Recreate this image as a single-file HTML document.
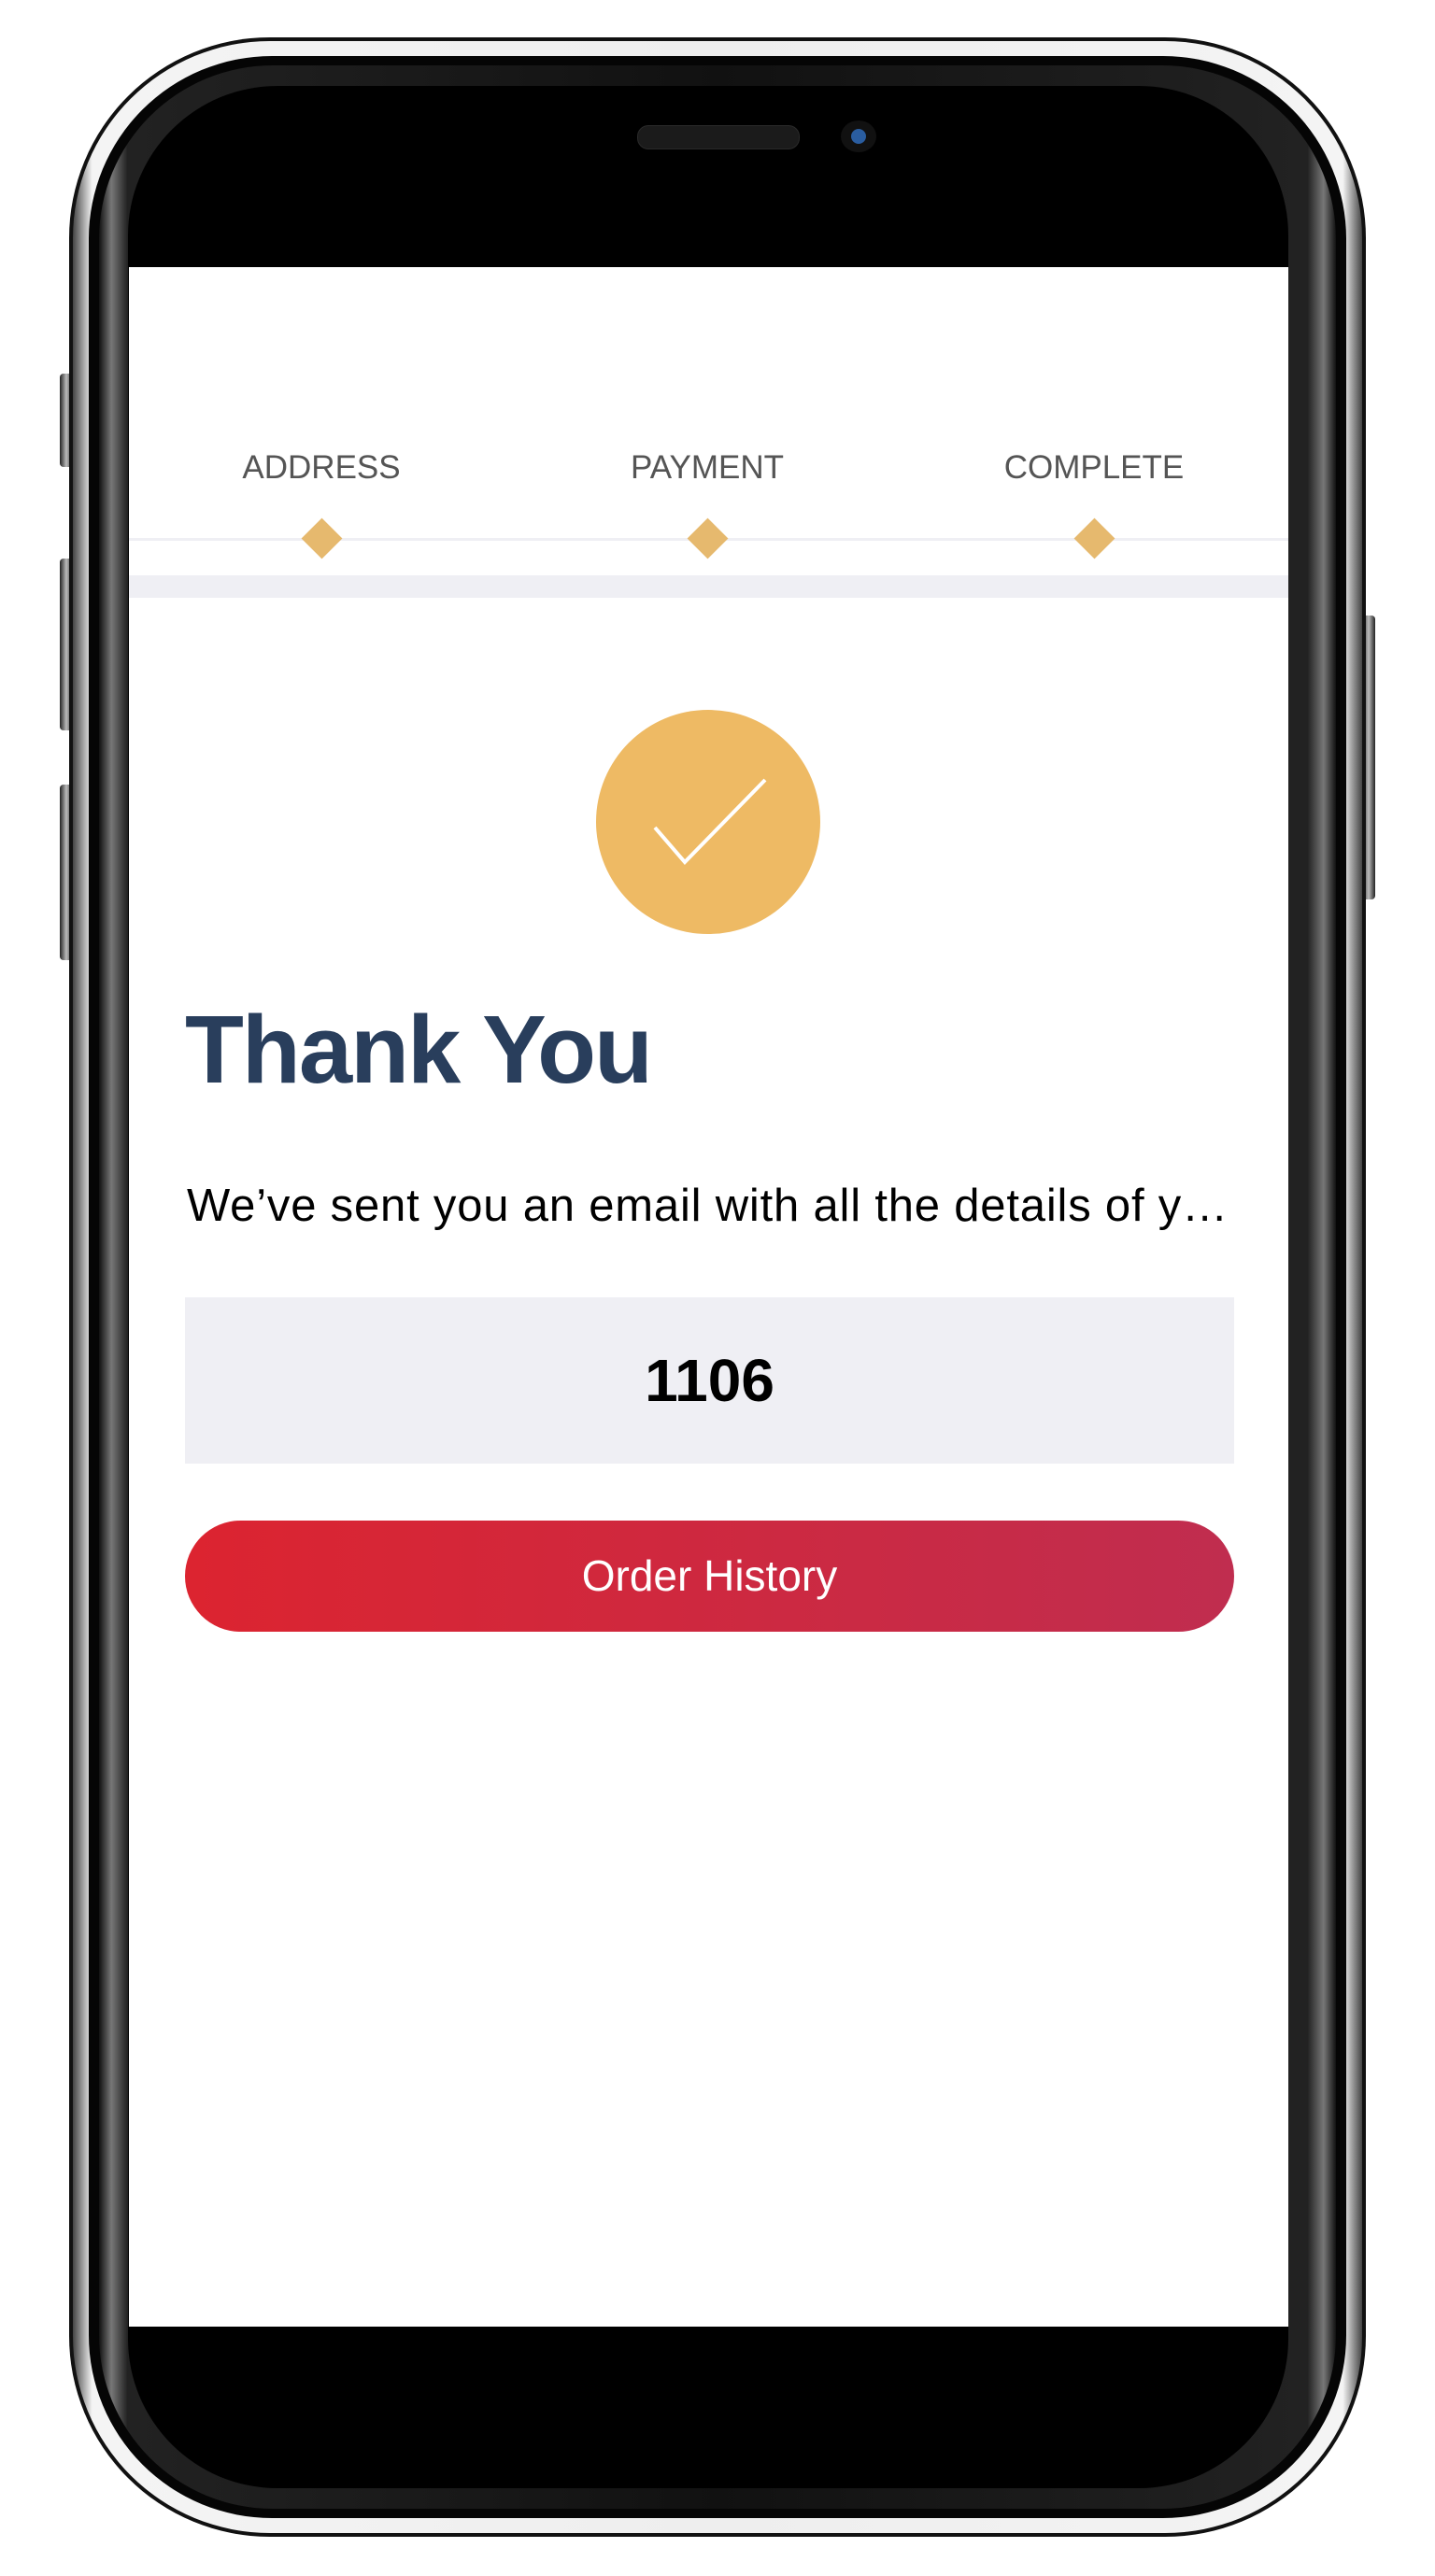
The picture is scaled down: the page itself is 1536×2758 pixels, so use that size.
<!DOCTYPE html>
<html><head><meta charset="utf-8"><style>
html,body{margin:0;padding:0;background:#fff;}
body{width:1536px;height:2758px;position:relative;overflow:hidden;font-family:"Liberation Sans",sans-serif;}
.abs{position:absolute;}
</style></head><body>
<!-- side buttons -->
<div class="abs" style="left:64px;top:400px;width:14px;height:100px;background:linear-gradient(90deg,#222,#bbb,#333);border-radius:4px"></div>
<div class="abs" style="left:64px;top:598px;width:14px;height:184px;background:linear-gradient(90deg,#222,#bbb,#333);border-radius:4px"></div>
<div class="abs" style="left:64px;top:840px;width:14px;height:188px;background:linear-gradient(90deg,#222,#bbb,#333);border-radius:4px"></div>
<div class="abs" style="left:1458px;top:659px;width:14px;height:304px;background:linear-gradient(90deg,#333,#bbb,#222);border-radius:4px"></div>
<!-- phone body -->
<div class="abs" style="left:74px;top:40px;width:1388px;height:2676px;border-radius:215px;background:#111;"></div>
<div class="abs" style="left:78px;top:44px;width:1380px;height:2668px;border-radius:211px;background:linear-gradient(90deg,#444,#f4f4f4 1.5%,#eee 50%,#f4f4f4 98.5%,#444);"></div>
<div class="abs" style="left:95px;top:60px;width:1346px;height:2636px;border-radius:196px;background:#050505;"></div>
<div class="abs" style="left:106px;top:70px;width:1324px;height:2616px;border-radius:186px;background:linear-gradient(90deg,#111,#777 1%,#222 2.3%,#111 50%,#222 97.7%,#777 99%,#111);"></div>
<div class="abs" style="left:137px;top:92px;width:1242px;height:2572px;border-radius:160px;background:#000;"></div>
<!-- speaker & camera -->
<div class="abs" style="left:682px;top:134px;width:172px;height:24px;border-radius:12px;background:#1b1b1b;border:1px solid #2a2a2a"></div>
<div class="abs" style="left:900px;top:129px;width:38px;height:34px;border-radius:50%;background:#111;"></div>
<div class="abs" style="left:911px;top:138px;width:16px;height:16px;border-radius:50%;background:#2a5da0;"></div>
<!-- screen -->
<div class="abs" style="left:138px;top:286px;width:1241px;height:2205px;background:#fff;overflow:hidden;">
  <div class="abs" style="left:0;top:290px;width:1241px;height:3px;background:#efeff4"></div>
  <div class="abs" style="left:0;top:330px;width:1241px;height:24px;background:#efeff4"></div>
  <div class="abs" style="left:106px;top:195px;width:200px;text-align:center;font-size:35px;color:#555;">ADDRESS</div>
  <div class="abs" style="left:519px;top:195px;width:200px;text-align:center;font-size:35px;color:#555;">PAYMENT</div>
  <div class="abs" style="left:923px;top:195px;width:220px;text-align:center;font-size:35px;color:#555;">COMPLETE</div>
  <div class="abs" style="left:191px;top:275px;width:31px;height:31px;background:#e6b96e;transform:rotate(45deg);"></div>
  <div class="abs" style="left:604px;top:275px;width:31px;height:31px;background:#e6b96e;transform:rotate(45deg);"></div>
  <div class="abs" style="left:1018px;top:275px;width:31px;height:31px;background:#e6b96e;transform:rotate(45deg);"></div>
  <div class="abs" style="left:500px;top:474px;width:240px;height:240px;border-radius:50%;background:#eeba64;"></div>
  <svg class="abs" style="left:0;top:0" width="1241" height="900"><polyline points="563,600 595,637 681,549" fill="none" stroke="#fff" stroke-width="4"/></svg>
  <div class="abs" style="left:60px;top:779px;font-size:103px;font-weight:bold;color:#293e5c;letter-spacing:-2px;">Thank You</div>
  <div class="abs" style="left:62px;top:977px;font-size:49px;color:#000;white-space:nowrap;letter-spacing:0.8px;">We’ve sent you an email with all the details of y…</div>
  <div class="abs" style="left:60px;top:1103px;width:1123px;height:178px;background:#efeff4;text-align:center;line-height:178px;font-size:64px;font-weight:bold;color:#000;">1106</div>
  <div class="abs" style="left:60px;top:1342px;width:1123px;height:119px;border-radius:60px;background:linear-gradient(90deg,#dc2430,#c02d4f);text-align:center;line-height:119px;font-size:46px;color:#fff;">Order History</div>
</div>
</body></html>
